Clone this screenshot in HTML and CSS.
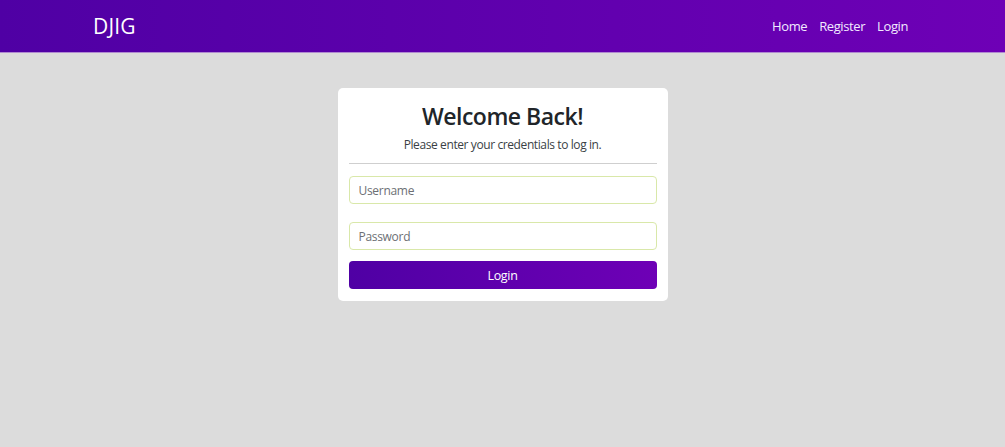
FILE: index.html
```html
<!DOCTYPE html>
<html lang="en">
<head>
<meta charset="utf-8">
<title>DJIG - Login</title>
<link rel="stylesheet" href="styles.css">
</head>
<body>
<nav class="navbar">
  <div class="nav-inner">
    <a class="brand" href="#">DJIG</a>
    <div class="nav-links">
      <a href="#">Home</a>
      <a href="#">Register</a>
      <a href="#">Login</a>
    </div>
  </div>
</nav>
<main class="main">
  <div class="card">
    <h1 class="title">Welcome Back!</h1>
    <p class="subtitle">Please enter your credentials to log in.</p>
    <hr class="divider">
    <form class="form">
      <input class="field" type="text" placeholder="Username">
      <input class="field" type="password" placeholder="Password">
      <button class="btn" type="button">Login</button>
    </form>
  </div>
</main>
</body>
</html>
```
FILE: styles.css
```css
* { box-sizing: border-box; }
html, body { margin: 0; padding: 0; }
body {
  background: #dcdcdc;
  font-family: "Open Sans", "Noto Sans", sans-serif;
  color: #212529;
  min-height: 447px;
}
.navbar {
  height: 53px;
  background: linear-gradient(to right, #4f00a4, #6e00b6);
  border-bottom: 1px solid #b08ad0;
}
.nav-inner {
  width: 815px;
  margin: 0 0 0 93px;
  height: 100%;
  display: flex;
  align-items: center;
  justify-content: space-between;
}
.brand {
  color: #fff;
  text-decoration: none;
  font-size: 21px;
  letter-spacing: 0.2px;
}
.nav-links { display: flex; gap: 12px; }
.nav-links a {
  color: #f2eaff;
  text-decoration: none;
  font-size: 13px;
  letter-spacing: -0.4px;
}
.main {
  display: flex;
  justify-content: center;
  padding-top: 35px;
}
.card {
  width: 330px;
  background: #fff;
  border-radius: 5px;
  padding: 10px 11px 12px;
  text-align: center;
}
.title {
  margin: 2px 0 0;
  font-size: 23px;
  font-weight: 600;
  line-height: 32px;
  letter-spacing: -0.5px;
  color: #212529;
}
.subtitle {
  margin: 4px 0 0;
  font-size: 12px;
  line-height: 18px;
  color: #3a3f45;
  letter-spacing: -0.4px;
}
.divider {
  margin: 9px 0 12px;
  border: 0;
  border-top: 1px solid #cfcfcf;
}
.form {
  display: flex;
  flex-direction: column;
  gap: 18px;
}
.field {
  height: 28px;
  border: 1px solid #d9e8a9;
  border-radius: 4px;
  padding: 0 9px;
  font-family: inherit;
  font-size: 12px;
  color: #212529;
  outline: none;
}
.field::placeholder { color: #6c6f74; letter-spacing: -0.3px; }
.btn {
  margin-top: -7px;
  height: 28px;
  border: 0;
  border-radius: 4px;
  background: linear-gradient(to right, #4f00a4, #6e00b6);
  color: #fff;
  font-family: inherit;
  font-size: 12.5px;
  letter-spacing: -0.3px;
}
```
